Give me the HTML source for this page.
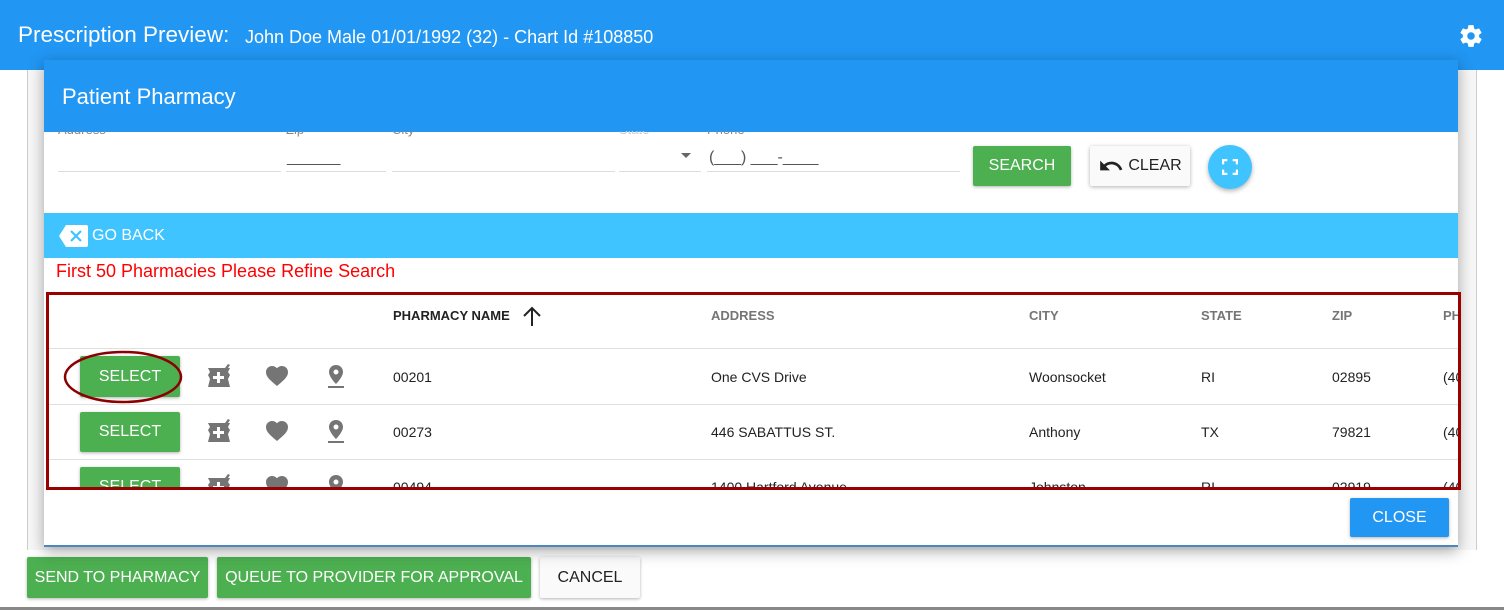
<!DOCTYPE html>
<html><head><style>
*{box-sizing:border-box;margin:0;padding:0}
body{width:1504px;height:610px;position:relative;overflow:hidden;background:#fff;font-family:"Liberation Sans",Arial,sans-serif}
.a{position:absolute}
.top{left:0;top:0;width:1504px;height:70px;background:#2196f3;color:#fff}
.btn{position:absolute;display:flex;align-items:center;justify-content:center;font-size:16px;border-radius:2px;box-shadow:0 1px 3px rgba(0,0,0,.3)}
.g{background:#4caf50;color:#fff}
.lab{position:absolute;top:122px;font-size:13px;color:#888}
.ul{position:absolute;top:171px;height:1px;background:#ddd}
.th{position:absolute;top:308px;font-size:13px;font-weight:bold;color:#757575}
.hr{position:absolute;left:49px;width:1409px;height:1px;background:#e0e0e0}
</style></head><body>
<div class="a top">
 <div class="a" style="left:18px;top:22px;font-size:22.5px">Prescription Preview:</div>
 <div class="a" style="left:245px;top:27px;font-size:18px">John Doe Male 01/01/1992 (32) - Chart Id #108850</div>
 <svg class="a" style="left:1458px;top:23px" width="26" height="26" viewBox="0 0 24 24"><path fill="#fff" d="M19.4 13c.04-.3.06-.6.06-1s-.02-.7-.06-1l2.1-1.650c.2-.15.24-.42.12-.64l-2-3.46c-.12-.22-.39-.3-.61-.22l-2.490 1c-.52-.4-1.080-.73-1.690-.98l-.38-2.650A.49.49 0 0 0 14 2h-4c-.25 0-.46.18-.49.42l-.38 2.65c-.61.25-1.17.59-1.69.98l-2.49-1c-.23-.09-.49 0-.61.22l-2 3.46c-.13.22-.07.49.12.64L4.57 11c-.04.32-.07.65-.07 1s.03.68.07 1l-2.11 1.65c-.19.15-.24.42-.12.64l2 3.46c.12.22.39.3.61.22l2.49-1c.52.4 1.08.73 1.69.98l.38 2.65c.03.24.24.42.49.42h4c.25 0 .46-.18.49-.42l.38-2.65c.61-.25 1.17-.59 1.69-.98l2.49 1c.23.09.49 0 .61-.22l2-3.46c.12-.22.07-.49-.12-.64L19.4 13zM12 15.5A3.5 3.5 0 1 1 12 8.5a3.5 3.5 0 0 1 0 7z"/></svg>
</div>
<div class="a" style="left:27px;top:70px;width:1450px;height:480px;border-left:1px solid #ccc;border-right:1px solid #ccc;background:#f7f7f7"></div>
<div class="a" style="left:0;top:607px;width:1504px;height:3px;background:#888"></div>
<div class="btn g" style="left:27px;top:557px;width:181px;height:41px">SEND TO PHARMACY</div>
<div class="btn g" style="left:217px;top:557px;width:314px;height:41px">QUEUE TO PROVIDER FOR APPROVAL</div>
<div class="btn" style="left:540px;top:557px;width:100px;height:41px;background:#fafafa;color:#222">CANCEL</div>

<div class="a" style="left:44px;top:60px;width:1414px;height:487px;background:#fff;box-shadow:0 4px 14px rgba(0,0,0,.35);border-bottom:2px solid #4a86c0"></div>
<div class="a" style="left:44px;top:60px;width:1414px;height:72px;background:#2196f3;color:#fff;font-size:22px;padding:24px 18px">Patient Pharmacy</div>
<div class="lab" style="left:58px;clip-path:inset(9px 0 0 0)">Address</div>
<div class="lab" style="left:286px;clip-path:inset(9px 0 0 0)">Zip</div>
<div class="lab" style="left:392px;clip-path:inset(9px 0 0 0)">City</div>
<div class="lab" style="left:619px;color:#ccc;clip-path:inset(9px 0 0 0)">State</div>
<div class="lab" style="left:707px;clip-path:inset(9px 0 0 0)">Phone</div>
<div class="ul" style="left:58px;width:223px"></div>
<div class="ul" style="left:286px;width:100px"></div>
<div class="ul" style="left:392px;width:223px"></div>
<div class="ul" style="left:619px;width:82px"></div>
<div class="ul" style="left:707px;width:253px"></div>
<div class="a" style="left:287px;top:149px;color:#555;font-size:16px">______</div>
<div class="a" style="left:681px;top:153px;border:5px solid transparent;border-top:5px solid #666"></div>
<div class="a" style="left:709px;top:149px;color:#555;font-size:16px">(___) ___-____</div>
<div class="btn g" style="left:973px;top:146px;width:98px;height:40px">SEARCH</div>
<div class="btn" style="left:1090px;top:146px;width:100px;height:40px;background:#fafafa;color:#222;box-shadow:0 1px 4px rgba(0,0,0,.3)"><svg width="26" height="20" viewBox="0 0 24 18" style="margin-right:4px"><path fill="#222" d="M12.5 5c-2.65 0-5.05 1-6.9 2.6L2 4v9h9L7.4 9.4c1.4-1.2 3.2-1.900 5.1-1.9 3.5 0 6.5 2.3 7.6 5.5l2.4-.8C21 8.1 17.1 5 12.5 5z"/></svg>CLEAR</div>
<div class="a" style="left:1208px;top:145px;width:44px;height:44px;border-radius:50%;background:#40c4ff;box-shadow:0 2px 5px rgba(0,0,0,.3)"><svg class="a" style="left:14px;top:14px" width="16" height="16" viewBox="0 0 18 18"><path fill="none" stroke="#fff" stroke-width="3" d="M1 6V1h5M12 1h5v5M17 12v5h-5M6 17H1v-5"/></svg></div>

<div class="a" style="left:44px;top:213px;width:1414px;height:45px;background:#40c4ff;color:#fff;font-size:16px">
 <svg class="a" style="left:15px;top:12px" width="29" height="22" viewBox="0 0 29 22"><path fill="#fff" d="M7 0h20a2 2 0 0 1 2 2v18a2 2 0 0 1-2 2H7L0 11z"/><path stroke="#40c4ff" stroke-width="2.2" d="M12 6l10 10M22 6L12 16"/></svg>
 <div class="a" style="left:48px;top:14px">GO BACK</div>
</div>
<div class="a" style="left:56px;top:261px;font-size:18px;color:#f00">First 50 Pharmacies Please Refine Search</div>

<div class="a" style="left:46px;top:292px;width:1415px;height:198px;border:3px solid #990000;background:#fff"></div>
<div class="th" style="left:393px;color:#222">PHARMACY NAME</div>
<svg class="a" style="left:522px;top:305px" width="20" height="22" viewBox="0 0 20 22"><path d="M10 21V3M2 11l8-8 8 8" fill="none" stroke="#222" stroke-width="2"/></svg>
<div class="th" style="left:711px">ADDRESS</div>
<div class="th" style="left:1029px">CITY</div>
<div class="th" style="left:1201px">STATE</div>
<div class="th" style="left:1332px">ZIP</div>
<div class="th" style="left:1443px;width:15px;overflow:hidden">PHONE</div>
<div class="hr" style="top:348px"></div>
<div class="hr" style="top:404px"></div>
<div class="hr" style="top:459px"></div>

<div class="a" style="left:49px;top:349px;width:1409px;height:138px;overflow:hidden">
 <div class="btn g" style="left:31px;top:7px;width:100px;height:41px">SELECT</div>
 <div class="btn g" style="left:31px;top:63px;width:100px;height:40px">SELECT</div>
 <div class="btn g" style="left:31px;top:118px;width:100px;height:40px">SELECT</div>
</div>
<svg class="a" style="left:49px;top:349px;overflow:hidden" width="1409" height="138">
 <g fill="#757575">
  <g id="r1">
   <path d="M159 19h22l-2 4 2 3-2 4 2 8h-22l2-8-2-4 2-3z"/><path d="M176 19l3-4 2 1-2 3z"/>
   <path fill="#fff" d="M168 23h3v4h4v3h-4v4h-3v-4h-4v-3h4z"/>
   <path d="M228 39l-2-2c-7-6-11-9-11-14 0-3.5 2.8-6 6-6 2 0 3.9.9 5 2.3C227.1 17.9 229 17 231 17c3.2 0 6 2.5 6 6 0 5-4 8-11 14z" transform="translate(2 0)"/>
   <path d="M287 16c-4 0-7 3-7 7 0 5 7 12 7 12s7-7 7-12c0-4-3-7-7-7zm0 9.5a2.5 2.5 0 1 1 0-5 2.5 2.5 0 0 1 0 5z"/><rect x="279" y="37" width="16" height="2"/>
  </g>
  <use href="#r1" y="55"/><use href="#r1" y="110"/>
 </g>
 <g font-family="Liberation Sans,Arial,sans-serif" font-size="14" fill="#222">
  <text x="344" y="33">00201</text><text x="662" y="33">One CVS Drive</text><text x="980" y="33">Woonsocket</text><text x="1152" y="33">RI</text><text x="1283" y="33">02895</text><text x="1394" y="33">(401)</text>
  <text x="344" y="88">00273</text><text x="662" y="88">446 SABATTUS ST.</text><text x="980" y="88">Anthony</text><text x="1152" y="88">TX</text><text x="1283" y="88">79821</text><text x="1394" y="88">(401)</text>
  <text x="344" y="143">00494</text><text x="662" y="143">1400 Hartford Avenue</text><text x="980" y="143">Johnston</text><text x="1152" y="143">RI</text><text x="1283" y="143">02919</text><text x="1394" y="143">(401)</text>
 </g>
 <ellipse cx="74" cy="28" rx="58" ry="25" fill="none" stroke="#8b0000" stroke-width="2.5"/>
</svg>
<div class="a" style="left:46px;top:487px;width:1415px;height:3px;background:#990000"></div>
<div class="btn" style="left:1350px;top:498px;width:99px;height:39px;background:#2196f3;color:#fff">CLOSE</div>
</body></html>
